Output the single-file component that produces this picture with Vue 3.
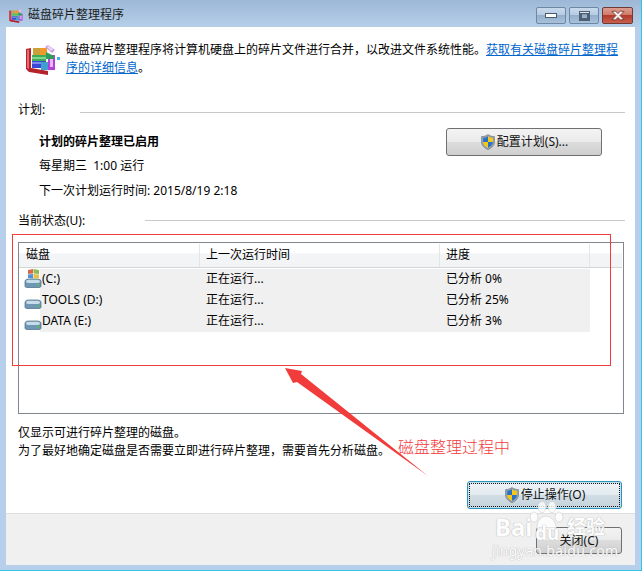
<script setup>
const rows = [
  { name: '(C:)', last: '正在运行...', progress: '已分析 0%', system: true },
  { name: 'TOOLS (D:)', last: '正在运行...', progress: '已分析 25%', system: false },
  { name: 'DATA (E:)', last: '正在运行...', progress: '已分析 3%', system: false }
]
</script>

<template>
  <div class="window">
    <svg width="0" height="0" class="defs">
      <defs>
        <symbol id="shield" viewBox="0 0 16 16">
          <path d="M8 .6 C6 2 4 2.6 1.6 2.6 V8 C1.6 11.6 4.6 14.2 8 15.6 C11.4 14.2 14.4 11.6 14.4 8 V2.6 C12 2.6 10 2 8 .6Z" fill="#9aa3ad" stroke="#6f7883" stroke-width=".7"/>
          <path d="M8 2.2 C6.6 3.2 5 3.7 3.2 3.8 V8 H8Z" fill="#2a72c8"/>
          <path d="M8 2.2 C9.4 3.2 11 3.7 12.8 3.8 V8 H8Z" fill="#f6c915"/>
          <path d="M3.2 8 H8 V13.8 C5.4 12.6 3.2 10.8 3.2 8Z" fill="#f6c915"/>
          <path d="M12.8 8 H8 V13.8 C10.6 12.6 12.8 10.8 12.8 8Z" fill="#2a72c8"/>
        </symbol>
        <symbol id="defrag" viewBox="0 0 30 30">
          <path d="M0 4 L5 3 V23 L22 26 V30 L3 27 L0 24Z" fill="#b5232b"/>
          <path d="M1 5 L3 4.500 V24 L1 23Z" fill="#e56a72"/>
          <rect x="7" y="3" width="7" height="7" fill="#c9a13a"/>
          <rect x="14" y="3" width="7" height="7" fill="#ef9a2a"/>
          <rect x="6" y="10" width="14" height="6" fill="#3fae5a"/>
          <rect x="6" y="12" width="14" height="2" fill="#83d68c"/>
          <rect x="6" y="16" width="14" height="7" fill="#3a48d8"/>
          <rect x="6" y="17" width="14" height="2" fill="#7c88f0"/>
          <rect x="15" y="17" width="7" height="8" fill="#3f9fd0"/>
          <rect x="22" y="10" width="7" height="15" fill="#b340d8"/>
          <rect x="24" y="12" width="3" height="10" fill="#e5b8f5"/>
          <path d="M20 7 L28 11 V14 H20Z" fill="#2e9e5a"/>
          <path d="M19 2 L22 0 L29 5 L26 8Z" fill="#cf9be8"/>
          <path d="M21 2 L23 1 L27 4.500 L25 6Z" fill="#ecd9f6"/>
        </symbol>
        <symbol id="drive" viewBox="0 0 18 18">
          <path d="M1 10.500 C1 8.500 3 8 5 8 H13 C15 8 17 8.500 17 10.500 V15 C17 16 16 16.500 15 16.500 H3 C2 16.500 1 16 1 15Z" fill="#6f97b5" stroke="#4a6b85" stroke-width=".7"/>
          <path d="M2 10.500 C2 9.200 4 8.800 5 8.800 H13 C14 8.800 16 9.200 16 10.500 C16 11.800 14 12 13 12 H5 C4 12 2 11.800 2 10.500Z" fill="#c8dbe8"/>
          <rect x="13" y="13" width="2" height="2" fill="#4fc24f"/>
        </symbol>
      </defs>
    </svg>

    <header class="titlebar">
      <svg class="title-icon" width="14" height="14"><use href="#defrag"/></svg>
      <span class="title-text">磁盘碎片整理程序</span>
      <div class="controls">
        <span class="ctl">
          <svg width="12" height="6" viewBox="0 0 12 6"><rect x=".5" y=".5" width="11" height="4" fill="#fff" stroke="#4a5b6e"/></svg>
        </span>
        <span class="ctl">
          <svg width="11" height="10" viewBox="0 0 11 10"><path fill-rule="evenodd" d="M0 0H11V10H0ZM3 3.500V7H8V3.500Z" fill="#4f6073"/><rect x="1" y="1" width="9" height="1" fill="#dfe6ee"/></svg>
        </span>
        <span class="ctl close">
          <svg width="14" height="11" viewBox="0 0 14 11"><path d="M1 1.500 L4.500 1 L7 3.500 L9.500 1 L13 1.500 L9 5.500 L13 9.500 L9.500 10 L7 7.500 L4.500 10 L1 9.500 L5 5.500Z" fill="#f4eeee" stroke="#6b2c26" stroke-width=".8"/></svg>
        </span>
      </div>
    </header>

    <main class="client">
      <div class="content">
        <div class="intro">
          <svg class="intro-icon" width="34" height="30" viewBox="0 0 34 30"><use href="#defrag" width="30" height="30"/><rect x="31" y="12" width="3" height="3" fill="#3fb6e8"/></svg>
          <p class="intro-text">磁盘碎片整理程序将计算机硬盘上的碎片文件进行合并，以改进文件系统性能。<a class="link">获取有关磁盘碎片整理程序的详细信息</a>。</p>
        </div>

        <div class="heading first">
          <span>计划:</span>
          <i class="rule first-rule"></i>
        </div>

        <div class="schedule">
          <div class="schedule-lines">
            <div class="strong">计划的碎片整理已启用</div>
            <div class="l2">每星期三 &nbsp;1:00 运行</div>
            <div class="l3">下一次计划运行时间: 2015/8/19 2:18</div>
          </div>
          <button class="btn config">
            <svg width="16" height="16"><use href="#shield"/></svg>
            <span>配置计划(S)...</span>
          </button>
        </div>

        <div class="heading second">
          <span>当前状态(U):</span>
          <i class="rule second-rule"></i>
        </div>

        <div class="table">
          <div class="thead">
            <div class="th w1">磁盘</div>
            <div class="th w2">上一次运行时间</div>
            <div class="th w3">进度</div>
            <div class="th w4"></div>
          </div>
          <div class="tbody">
            <div v-for="row in rows" :key="row.name" class="tr">
              <div class="drive-cell">
                <svg class="drive-icon" width="18" height="18"><use href="#drive"/></svg>
                <svg v-if="row.system" class="flag" width="11" height="10" viewBox="0 0 11 10">
                  <path d="M0 1 L5 0 V4.500 L0 5Z" fill="#d9694a"/>
                  <path d="M5.500 0 L11 1 V5 L5.500 4.500Z" fill="#8dbb55"/>
                  <path d="M0 5.500 L5 5 V9.500 L0 9Z" fill="#4f93d6"/>
                  <path d="M5.500 5 L11 5.500 V9.500 L5.500 9.500Z" fill="#e6c04a"/>
                </svg>
              </div>
              <div class="td name">{{ row.name }}</div>
              <div class="td last">{{ row.last }}</div>
              <div class="td prog">{{ row.progress }}</div>
            </div>
          </div>
        </div>

        <p class="note">仅显示可进行碎片整理的磁盘。<br>为了最好地确定磁盘是否需要立即进行碎片整理，需要首先分析磁盘。</p>

        <div class="actions">
          <button class="btn stop">
            <svg width="16" height="16"><use href="#shield"/></svg>
            <span>停止操作(O)</span>
          </button>
        </div>
      </div>

      <footer class="footer">
        <button class="btn closebtn">关闭(C)</button>
      </footer>
    </main>

    <!-- annotations drawn on top of the screenshot -->
    <div class="mark-rect"></div>
    <svg class="arrow" width="642" height="571" viewBox="0 0 642 571">
      <polygon points="285,368 302,371 301,374 428,476 297,382 293,383" fill="#f23c3c"/>
    </svg>
    <div class="mark-text">磁盘整理过程中</div>

    <!-- watermark -->
    <div class="wm">
      <span class="wm-bai">Bai</span>
      <svg class="wm-paw" width="36" height="36" viewBox="0 0 36 36">
        <g fill="#fff" fill-opacity=".8" stroke="#d4d4d4" stroke-width=".8">
          <ellipse cx="6" cy="17" rx="4" ry="5"/>
          <ellipse cx="14" cy="7" rx="4" ry="5.500"/>
          <ellipse cx="24" cy="7" rx="4" ry="5.500"/>
          <ellipse cx="31" cy="17" rx="4" ry="5"/>
          <path d="M18 16 C12 16 8 24 9 28 C10 32 15 30 18 30 C22 30 27 32 28 28 C29 24 24 16 18 16Z"/>
        </g>
      </svg>
      <span class="wm-du">du</span>
      <span class="wm-jy">经验</span>
      <span class="wm-url">jingyan.baidu.com</span>
    </div>
  </div>
</template>

<style>
html, body { margin: 0; padding: 0; background: #b8cfe9; }
</style>

<style scoped>
.window {
  position: relative;
  box-sizing: border-box;
  width: 642px;
  height: 571px;
  display: flex;
  flex-direction: column;
  overflow: hidden;
  background: #b7cfea;
  border-right: 1px solid #2cc6e6;
  border-bottom: 1px solid #2cc6e6;
  font-family: "Noto Sans", "Noto Sans CJK SC", sans-serif;
  font-size: 12px;
  line-height: 18px;
  color: #000;
}
.defs { position: absolute; }
.titlebar {
  height: 27px;
  flex: none;
  display: flex;
  align-items: flex-start;
  background: linear-gradient(#9db8d6, #b6cfe9);
  padding-left: 9px;
  padding-right: 8px;
}
.title-icon { margin-top: 9px; }
.title-text { margin-left: 5px; margin-top: 6px; color: #1b1b1b; }
.controls { margin-left: auto; margin-top: 7px; display: flex; gap: 3px; }
.ctl {
  box-sizing: border-box;
  width: 30px;
  height: 17px;
  display: flex;
  align-items: center;
  justify-content: center;
  border: 1px solid #6f87a3;
  border-radius: 2px;
  background: linear-gradient(#c8d9ec 0, #b6cce3 45%, #94afcb 50%, #a9c2db 100%);
}
.ctl.close {
  width: 31px;
  border-color: #6f3a33;
  background: linear-gradient(#dc9d90 0, #cf7b6b 45%, #b13a2a 50%, #c9604e 100%);
}
.client {
  flex: 1;
  margin: 0 6px 5px 6px;
  background: #fff;
  display: flex;
  flex-direction: column;
  min-height: 0;
}
.content {
  flex: 1;
  padding: 14px 10px 0 12px;
  min-height: 0;
}
.intro { display: flex; }
.intro-icon { margin: 4px 0 0 8px; flex: none; }
.intro-text { margin: 0 0 0 6px; width: 555px; }
.link { color: #0066cc; text-decoration: underline; }
.heading { display: flex; align-items: center; }
.heading.first { margin-top: 24px; }
.heading.second { margin-top: 12px; }
.rule { display: block; flex: 1; height: 1px; background: #c9c9c9; }
.first-rule { margin-left: 35px; margin-top: 4px; }
.second-rule { margin-left: 60px; margin-top: -2px; }
.schedule { display: flex; justify-content: space-between; padding: 0 23px 0 21px; }
.schedule-lines { padding-top: 14px; }
.strong { font-weight: 700; }
.l2 { margin-top: 6px; }
.l3 { margin-top: 7px; }
.btn {
  box-sizing: border-box;
  display: flex;
  align-items: center;
  justify-content: center;
  gap: 1px;
  padding: 0;
  font: inherit;
  color: #111;
  border: 1px solid #707070;
  border-radius: 3px;
  background: linear-gradient(#f3f3f3 0, #ebebeb 48%, #dddddd 50%, #cfcfcf 100%);
}
.config { width: 156px; height: 28px; margin-top: 9px; }
.table {
  box-sizing: border-box;
  margin-top: 12px;
  width: 606px;
  height: 172px;
  border: 1px solid #82868e;
  padding: 1px 1px 0 0;
}
.thead {
  display: flex;
  height: 23px;
  border-bottom: 1px solid #d5d5d5;
  background: linear-gradient(#fff 0, #fff 40%, #f3f4f6 42%, #f3f4f6 100%);
}
.th {
  box-sizing: border-box;
  line-height: 22px;
  padding-left: 6px;
  border-right: 1px solid #e3e5e7;
}
.w1 { width: 181px; padding-left: 7px; }
.w2 { width: 240px; }
.w3 { width: 150px; }
.w4 { flex: 1; border-right: 0; }
.tbody { padding-top: 1px; }
.tr {
  display: grid;
  grid-template-columns: 21px 159px 240px 151px;
  height: 21px;
  line-height: 19px;
}
.td { background: #f0f0f0; }
.name { padding-left: 2px; }
.last, .prog { padding-left: 7px; }
.drive-cell { position: relative; }
.drive-icon { position: absolute; left: 5px; top: 2px; }
.flag { position: absolute; left: 9px; top: 0; }
.note { margin: 10px 0 0; }
.actions { display: flex; justify-content: flex-end; margin-top: 21px; padding-right: 3px; }
.stop {
  width: 155px;
  height: 28px;
  border: 1px solid #2e92ba;
  background: linear-gradient(#eef3f6 0, #e3ebf0 48%, #d2dde4 50%, #c6d3dc 100%);
  box-shadow: inset 0 0 0 1px #bfe3f1;
  outline: 1px dotted #111;
  outline-offset: -3px;
}
.footer {
  flex: none;
  box-sizing: border-box;
  height: 52px;
  background: #f0f0f0;
  border-top: 1px solid #dfdfdf;
  display: flex;
  justify-content: flex-end;
  padding: 13px 13px 0 0;
}
.closebtn { width: 86px; height: 27px; }
.mark-rect {
  position: absolute;
  left: 12px;
  top: 234px;
  width: 597px;
  height: 130px;
  border: 1px solid #f23c3c;
}
.arrow { position: absolute; left: 0; top: 0; pointer-events: none; }
.mark-text {
  position: absolute;
  left: 398px;
  top: 436px;
  font-size: 16px;
  line-height: 22px;
  color: #f23c3c;
  font-weight: 300;
}
.wm { position: absolute; left: 0; top: 0; pointer-events: none; color: #fff; }
.wm span { position: absolute; white-space: nowrap; text-shadow: 0 0 1px #b4b4b4, 0 0 1px #b4b4b4; opacity: .9; }
.wm-bai { left: 495px; top: 514px; font-size: 24px; line-height: 26px; font-weight: 700; }
.wm-paw { position: absolute; left: 528px; top: 500px; }
.wm-du { left: 535px; top: 523px; font-size: 19px; line-height: 20px; font-weight: 700; }
.wm-jy { left: 567px; top: 516px; font-size: 19px; line-height: 22px; font-weight: 700; }
.wm-url { left: 492px; top: 543px; font-size: 14px; line-height: 16px; letter-spacing: .3px; }
</style>
